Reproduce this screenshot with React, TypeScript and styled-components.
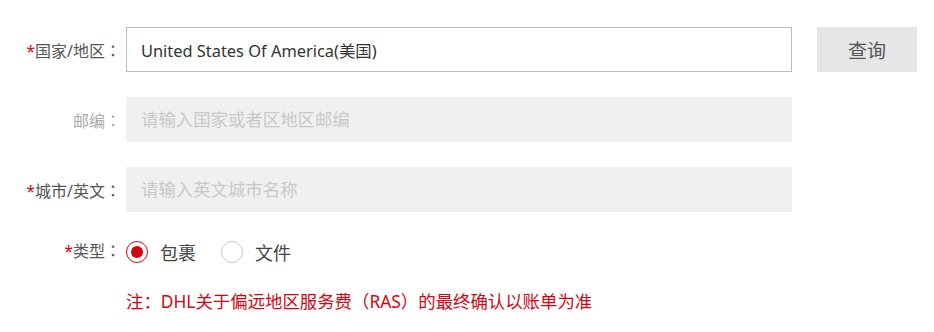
import styled, { createGlobalStyle } from "styled-components";

const GlobalStyle = createGlobalStyle`
  body {
    margin: 0;
    background: #fff;
    font-family: "Noto Sans", "Noto Sans CJK SC", sans-serif;
  }
`;

const RED = "#d40511";

const Form = styled.div`
  padding-top: 27px;
  display: flex;
  flex-direction: column;
  gap: 25px;
  width: 934px;
`;

const Row = styled.div<{ $h?: number }>`
  display: flex;
  align-items: center;
  height: ${(p) => p.$h ?? 45}px;
`;

const Label = styled.label<{ $muted?: boolean; $lift?: boolean }>`
  width: 121px;
  text-align: right;
  font-size: 16px;
  color: ${(p) => (p.$muted ? "#aaa" : "#555")};
  margin-right: 5px;
  padding-bottom: ${(p) => (p.$lift ? 5 : 0)}px;
  flex-shrink: 0;
`;

const Star = styled.span`
  color: ${RED};
`;

// centred full-width colon, as in the original label font
const Colon = styled.span`
  font-family: "Noto Sans CJK TC", sans-serif;
`;

const Input = styled.input<{ $disabled?: boolean }>`
  box-sizing: border-box;
  width: 666px;
  height: 45px;
  padding: 0 14px;
  font-size: 16.4px;
  font-family: inherit;
  color: #333;
  outline: none;
  border: 1px solid ${(p) => (p.$disabled ? "#f0f0f0" : "#bbb")};
  background: ${(p) => (p.$disabled ? "#f0f0f0" : "#fff")};
  &::placeholder {
    color: #c8c8c8;
    font-size: 17.4px;
  }
`;

const Button = styled.button`
  margin-left: 25px;
  width: 100px;
  height: 45px;
  border: none;
  background: #e6e6e6;
  color: #555;
  font-size: 19px;
  font-family: inherit;
`;

const Radios = styled.div`
  display: flex;
  align-items: center;
  gap: 25px;
`;

const RadioItem = styled.span`
  display: flex;
  align-items: center;
  gap: 12px;
  font-size: 18px;
  color: #444;
`;

const Circle = styled.span<{ $on?: boolean }>`
  box-sizing: border-box;
  width: 22px;
  height: 22px;
  border-radius: 50%;
  border: ${(p) => (p.$on ? `1.5px solid ${RED}` : "1px solid #ccc")};
  display: flex;
  align-items: center;
  justify-content: center;
  &::after {
    content: "";
    width: 12px;
    height: 12px;
    border-radius: 50%;
    background: ${(p) => (p.$on ? RED : "transparent")};
  }
`;

const Note = styled.div`
  margin-left: 126px;
  margin-top: -4px;
  font-size: 17.4px;
  color: ${RED};
`;

export default function App() {
  return (
    <>
      <GlobalStyle />
      <Form>
        <Row>
          <Label>
            <Star>*</Star>国家/地区<Colon>：</Colon>
          </Label>
          <Input defaultValue="United States Of America(美国)" />
          <Button>查询</Button>
        </Row>
        <Row>
          <Label $muted>
            邮编<Colon>：</Colon>
          </Label>
          <Input $disabled disabled placeholder="请输入国家或者区地区邮编" />
        </Row>
        <Row>
          <Label>
            <Star>*</Star>城市/英文<Colon>：</Colon>
          </Label>
          <Input $disabled disabled placeholder="请输入英文城市名称" />
        </Row>
        <Row $h={30}>
          <Label $lift>
            <Star>*</Star>类型<Colon>：</Colon>
          </Label>
          <Radios>
            <RadioItem>
              <Circle $on />
              包裹
            </RadioItem>
            <RadioItem>
              <Circle />
              文件
            </RadioItem>
          </Radios>
        </Row>
        <Note>注：DHL关于偏远地区服务费（RAS）的最终确认以账单为准</Note>
      </Form>
    </>
  );
}
